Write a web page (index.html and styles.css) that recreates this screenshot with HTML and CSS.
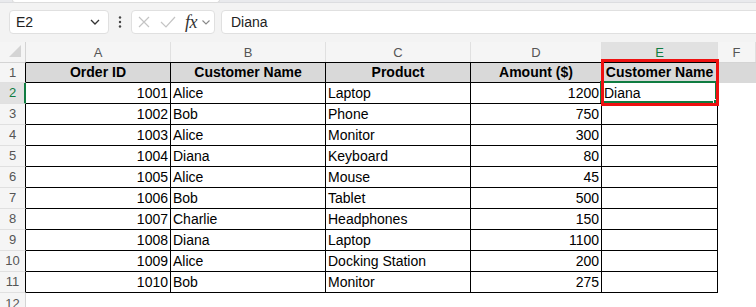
FILE: index.html
```html
<!DOCTYPE html>
<html>
<head>
<meta charset="utf-8">
<link rel="stylesheet" href="styles.css">
</head>
<body>
<div class="app">
  <div class="ribbon-tail"><div class="ribbon-panel"></div></div>
  <div class="formula-bar">
    <div class="namebox">
      <span class="namebox-text">E2</span>
      <svg class="chev" width="10" height="6" viewBox="0 0 10 6"><path d="M1 1 L5 5 L9 1" fill="none" stroke="#333" stroke-width="1.3"/></svg>
    </div>
    <div class="dots">
      <svg width="4" height="12" viewBox="0 0 4 12"><circle cx="2" cy="1.5" r="1.2" fill="#444"/><circle cx="2" cy="6" r="1.2" fill="#444"/><circle cx="2" cy="10.5" r="1.2" fill="#444"/></svg>
    </div>
    <div class="fxbox">
      <svg class="ico-x" width="12" height="12" viewBox="0 0 12 12"><path d="M1 1 L11 11 M11 1 L1 11" stroke="#c4c4c4" stroke-width="1.2" fill="none"/></svg>
      <svg class="ico-check" width="16" height="12" viewBox="0 0 16 12"><path d="M1 6 L6 11 L15 1" stroke="#c4c4c4" stroke-width="1.2" fill="none"/></svg>
      <span class="fx">fx</span>
      <svg class="chev-small" width="8" height="5" viewBox="0 0 8 5"><path d="M0.5 0.5 L4 4 L7.5 0.5" fill="none" stroke="#888" stroke-width="1.1"/></svg>
    </div>
    <div class="formula-input">Diana</div>
  </div>

  <div class="sheet">
    <!-- column headers -->
    <div class="corner"><svg width="13" height="13" viewBox="0 0 13 13"><path d="M12 0 L12 12 L0 12 Z" fill="#d4d4d4"/></svg></div>
    <div class="ch">A</div>
    <div class="ch">B</div>
    <div class="ch">C</div>
    <div class="ch">D</div>
    <div class="ch ch-sel">E</div>
    <div class="ch">F</div>

    <!-- row 1 -->
    <div class="rh rh-first">1</div>
    <div class="c th">Order ID</div>
    <div class="c th">Customer Name</div>
    <div class="c th">Product</div>
    <div class="c th">Amount ($)</div>
    <div class="c th">Customer Name</div>
    <div class="fill fill-head"></div>

    <!-- row 2 -->
    <div class="rh rh-sel">2</div>
    <div class="c num">1001</div>
    <div class="c">Alice</div>
    <div class="c">Laptop</div>
    <div class="c num">1200</div>
    <div class="c active">Diana
      <div class="active-border"><div class="handle"></div></div>
      <div class="annot"></div>
    </div>
    <div class="fill"></div>

    <div class="rh">3</div>
    <div class="c num">1002</div>
    <div class="c">Bob</div>
    <div class="c">Phone</div>
    <div class="c num">750</div>
    <div class="c"></div>
    <div class="fill"></div>

    <div class="rh">4</div>
    <div class="c num">1003</div>
    <div class="c">Alice</div>
    <div class="c">Monitor</div>
    <div class="c num">300</div>
    <div class="c"></div>
    <div class="fill"></div>

    <div class="rh">5</div>
    <div class="c num">1004</div>
    <div class="c">Diana</div>
    <div class="c">Keyboard</div>
    <div class="c num">80</div>
    <div class="c"></div>
    <div class="fill"></div>

    <div class="rh">6</div>
    <div class="c num">1005</div>
    <div class="c">Alice</div>
    <div class="c">Mouse</div>
    <div class="c num">45</div>
    <div class="c"></div>
    <div class="fill"></div>

    <div class="rh">7</div>
    <div class="c num">1006</div>
    <div class="c">Bob</div>
    <div class="c">Tablet</div>
    <div class="c num">500</div>
    <div class="c"></div>
    <div class="fill"></div>

    <div class="rh">8</div>
    <div class="c num">1007</div>
    <div class="c">Charlie</div>
    <div class="c">Headphones</div>
    <div class="c num">150</div>
    <div class="c"></div>
    <div class="fill"></div>

    <div class="rh">9</div>
    <div class="c num">1008</div>
    <div class="c">Diana</div>
    <div class="c">Laptop</div>
    <div class="c num">1100</div>
    <div class="c"></div>
    <div class="fill"></div>

    <div class="rh">10</div>
    <div class="c num">1009</div>
    <div class="c">Alice</div>
    <div class="c">Docking Station</div>
    <div class="c num">200</div>
    <div class="c"></div>
    <div class="fill"></div>

    <div class="rh">11</div>
    <div class="c num">1010</div>
    <div class="c">Bob</div>
    <div class="c">Monitor</div>
    <div class="c num">275</div>
    <div class="c"></div>
    <div class="fill"></div>

    <div class="rh rh-out">12</div>
    <div class="blank"></div>
    <div class="blank"></div>
    <div class="blank"></div>
    <div class="blank"></div>
    <div class="blank"></div>
    <div class="blank"></div>
  </div>
</div>
</body>
</html>
```

FILE: styles.css
```css
* { box-sizing: border-box; }

html, body {
  margin: 0;
  padding: 0;
  width: 756px;
  height: 307px;
  overflow: hidden;
  background: #ffffff;
  font-family: "Liberation Sans", Arial, sans-serif;
}

.app {
  width: 756px;
  height: 307px;
  display: flex;
  flex-direction: column;
  overflow: hidden;
}

/* ---------- toolbar ---------- */
.ribbon-tail {
  flex-shrink: 0;
  height: 3px;
  background: #e9eaed;
  border-bottom: 1px solid #dcdde0;
  display: flex;
}
.ribbon-panel {
  margin-left: 12px;
  width: 208px;
  height: 3px;
  background: #ffffff;
  border-radius: 0 0 5px 5px;
  border: 1px solid #dcdcdc;
  border-top: none;
}

.formula-bar {
  flex-shrink: 0;
  height: 39px;
  background: #f3f3f3;
  display: flex;
  align-items: flex-start;
  padding-top: 7px;
}

.namebox {
  margin-left: 9px;
  width: 100px;
  height: 24px;
  background: #ffffff;
  border: 1px solid #e0e0e0;
  border-radius: 4px;
  display: flex;
  align-items: center;
  justify-content: space-between;
  padding: 0 8px 0 6px;
}
.namebox-text {
  font-size: 14px;
  color: #222;
}
.chev { display: block; }

.dots {
  width: 22px;
  height: 24px;
  display: flex;
  align-items: center;
  justify-content: center;
}
.dots svg { display: block; }

.fxbox {
  width: 84px;
  height: 24px;
  background: #ffffff;
  border: 1px solid #e0e0e0;
  border-radius: 4px;
  display: flex;
  align-items: center;
  padding-left: 6px;
}
.ico-x { display: block; }
.ico-check { display: block; margin-left: 10px; }
.fx {
  font-family: "Liberation Serif", "Times New Roman", serif;
  font-style: italic;
  font-size: 18px;
  color: #333;
  margin-left: 9px;
  line-height: 20px;
  letter-spacing: -0.5px;
}
.chev-small { display: block; margin-left: 5px; }

.formula-input {
  flex: 1;
  margin-left: 6px;
  margin-right: -10px;
  height: 24px;
  background: #ffffff;
  border: 1px solid #e0e0e0;
  border-radius: 4px;
  font-size: 14px;
  color: #222;
  line-height: 22px;
  padding-left: 9px;
}

/* ---------- sheet ---------- */
.sheet {
  flex: 1 1 0;
  min-height: 0;
  overflow: hidden;
  display: grid;
  grid-template-columns: 26px 145px 155px 145px 131px 116px 1fr;
  grid-template-rows: 20px 21px repeat(10, 21px) 21px;
  background: #ffffff;
  font-size: 14px;
  color: #000;
}

.corner {
  background: #f5f5f5;
  border-right: 1px solid #d4d4d4;
  display: flex;
  align-items: flex-end;
  justify-content: flex-end;
  padding: 0 3px 4px 0;
}
.corner svg { display: block; }

.ch {
  background: #f5f5f5;
  border-right: 1px solid #e0e0e0;
  text-align: center;
  font-size: 13px;
  line-height: 21px;
  color: #555;
}
.ch-sel {
  background: #e1e1e1;
  color: #107c41;
}

.rh {
  background: #f5f5f5;
  border-right: 1px solid #000;
  border-bottom: 1px solid #e0e0e0;
  text-align: center;
  font-size: 13px;
  line-height: 20px;
  color: #555;
}
.rh-first {
  border-top: 1px solid #d4d4d4;
  line-height: 19px;
}
.rh-sel {
  background: #e1e1e1;
  color: #107c41;
  border-right: 2px solid #107c41;
  padding-left: 1px;
}
.rh-out {
  border-right: 1px solid #d4d4d4;
  border-bottom: none;
  line-height: 21px;
}

.c {
  border-right: 1px solid #000;
  border-bottom: 1px solid #000;
  padding: 0 2px;
  line-height: 21px;
  white-space: nowrap;
  overflow: visible;
  position: relative;
}
.num { text-align: right; }

.th {
  background: #d9d9d9;
  font-weight: bold;
  text-align: center;
  border-top: 1px solid #000;
  line-height: 19px;
}

.fill {
  background: #ffffff;
}
.fill-head {
  background: #d9d9d9;
  border-top: 1px solid #d4d4d4;
}

.blank { background: #ffffff; }

/* active cell + annotation (overlays) */
.active { z-index: 2; }
.active-border {
  position: absolute;
  left: -2px;
  top: -2px;
  right: 0;
  bottom: 0;
  border: 2px solid #107c41;
  pointer-events: none;
}
.handle {
  position: absolute;
  right: -4px;
  bottom: -4px;
  width: 6px;
  height: 6px;
  background: #107c41;
  border: 1px solid #ffffff;
}
.annot {
  position: absolute;
  left: -1px;
  top: -24px;
  width: 118px;
  height: 47px;
  border: 3px solid #ee1111;
  pointer-events: none;
}
```
